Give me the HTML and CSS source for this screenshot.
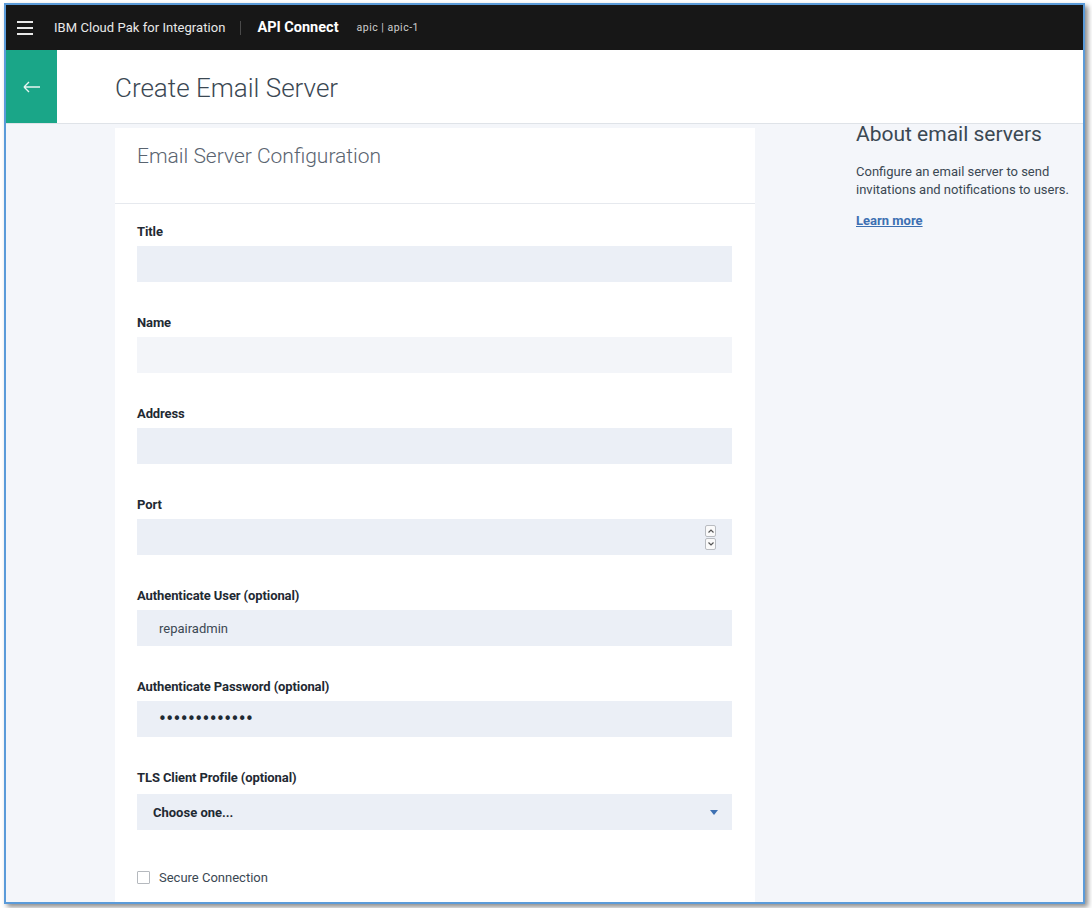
FILE: index.html
```html
<!DOCTYPE html>
<html lang="en">
<head>
<meta charset="utf-8">
<title>Create Email Server</title>
<link rel="stylesheet" href="styles.css">
</head>
<body>
<div class="frame">
  <header class="topbar">
    <span class="hamburger"><i></i><i></i><i></i></span>
    <span class="brand">IBM Cloud Pak for Integration</span>
    <span class="divider"></span>
    <span class="product">API Connect</span>
    <span class="instance">apic | apic-1</span>
  </header>
  <div class="titlebar">
    <a class="back" href="#">
      <svg width="18" height="12" viewBox="0 0 18 12"><path d="M1 6H17M1 6L6 1M1 6L6 11" fill="none" stroke="#e6f5f1" stroke-width="1.4"/></svg>
    </a>
    <h1 class="page-title">Create Email Server</h1>
  </div>
  <div class="content">
    <div class="gutter"></div>
    <section class="card">
      <div class="card-head">Email Server Configuration</div>
      <form class="card-body">
        <div class="field">
          <label class="label">Title</label>
          <div class="input"></div>
        </div>
        <div class="field">
          <label class="label">Name</label>
          <div class="input input-light"></div>
        </div>
        <div class="field">
          <label class="label">Address</label>
          <div class="input"></div>
        </div>
        <div class="field">
          <label class="label">Port</label>
          <div class="input input-number">
            <span class="spinner">
              <span class="spin"><svg width="6" height="4" viewBox="0 0 6 4"><path d="M0.5 3.5L3 1L5.5 3.5" fill="none" stroke="#555" stroke-width="1.2"/></svg></span>
              <span class="spin"><svg width="6" height="4" viewBox="0 0 6 4"><path d="M0.5 0.5L3 3L5.5 0.5" fill="none" stroke="#555" stroke-width="1.2"/></svg></span>
            </span>
          </div>
        </div>
        <div class="field">
          <label class="label">Authenticate User (optional)</label>
          <div class="input">repairadmin</div>
        </div>
        <div class="field">
          <label class="label">Authenticate Password (optional)</label>
          <div class="input input-pass">•••••••••••••</div>
        </div>
        <div class="field field-select">
          <label class="label">TLS Client Profile (optional)</label>
          <div class="input select">
            <span>Choose one...</span>
            <svg width="8" height="5" viewBox="0 0 8 5"><path d="M0 0H8L4 5Z" fill="#3d70b2"/></svg>
          </div>
        </div>
        <div class="check">
          <span class="box"></span>
          <span class="check-label">Secure Connection</span>
        </div>
      </form>
    </section>
    <aside class="aside">
      <h2 class="aside-title">About email servers</h2>
      <p class="aside-text">Configure an email server to send<br>invitations and notifications to users.</p>
      <a class="learn" href="#">Learn more</a>
    </aside>
  </div>
</div>
</body>
</html>
```
FILE: styles.css
```css
* { box-sizing: border-box; }
html, body { margin: 0; padding: 0; }
body {
  background: #ffffff;
  font-family: Roboto, "Noto Sans", sans-serif;
  width: 1092px;
  height: 908px;
  overflow: hidden;
}
.frame {
  margin: 3px 0 0 4px;
  width: 1081px;
  height: 901px;
  border: 2px solid #5b9bd9;
  box-shadow: 3px 3px 5px rgba(0,0,0,0.45);
  background: #f4f6fa;
  overflow: hidden;
  display: flex;
  flex-direction: column;
}
.topbar {
  height: 45px;
  flex: none;
  background: #171717;
  display: flex;
  align-items: center;
  color: #f2f2f2;
}
.hamburger {
  width: 16px;
  margin-left: 11px;
  display: flex;
  flex-direction: column;
  gap: 4px;
}
.hamburger i {
  display: block;
  height: 2px;
  background: #e8e8e8;
}
.brand {
  margin-left: 21px;
  font-size: 13px;
  letter-spacing: 0.05px;
  color: #e9e9e9;
}
.divider {
  width: 1px;
  height: 14px;
  background: #4a4a4a;
  margin: 0 16px 0 15px;
}
.product {
  font-weight: 700;
  font-size: 14.5px;
  color: #ffffff;
}
.instance {
  margin-left: 18px;
  font-size: 10.5px;
  letter-spacing: 0.5px;
  color: #cfcfcf;
}
.titlebar {
  height: 74px;
  flex: none;
  background: #ffffff;
  border-bottom: 1px solid #dfe3e8;
  display: flex;
  align-items: stretch;
}
.back {
  width: 51px;
  background: #1aa688;
  display: flex;
  align-items: center;
  justify-content: center;
}
.page-title {
  margin: 0 0 0 58px;
  align-self: center;
  font-size: 26px;
  font-weight: 300;
  color: #3b4853;
  padding-top: 2px;
}
.content {
  flex: 1;
  display: flex;
  align-items: stretch;
  min-height: 0;
}
.gutter { width: 109px; flex: none; }
.card {
  width: 640px;
  flex: none;
  margin-top: 4px;
  background: #ffffff;
}
.card-head {
  height: 76px;
  padding: 14px 0 0 22px;
  font-size: 21px;
  font-weight: 300;
  line-height: 28px;
  color: #5a6470;
  border-bottom: 1px solid #e6e9ee;
}
.card-body {
  padding: 20px 23px 0 22px;
  margin: 0;
}
.field { margin-bottom: 33px; }
.label {
  display: block;
  font-size: 13px;
  line-height: 16px;
  font-weight: 700;
  color: #1f2a33;
  letter-spacing: -0.1px;
  margin-bottom: 6px;
}
.field-select .label { margin-bottom: 8px; }
.input {
  height: 36px;
  background: #ebeff6;
  display: flex;
  align-items: center;
  padding: 0 16px 0 22px;
  font-size: 13px;
  color: #3b4853;
}
.input-light { background: #f3f5f9; }
.input-number { justify-content: flex-end; padding-right: 16px; }
.spinner {
  display: flex;
  flex-direction: column;
  gap: 1px;
}
.spin {
  width: 11px;
  height: 12px;
  border: 1px solid #b9bcc1;
  border-radius: 2px;
  background: #fafafa;
  display: flex;
  align-items: center;
  justify-content: center;
}
.input-pass {
  font-family: "DejaVu Sans", sans-serif;
  font-size: 15px;
  letter-spacing: -1.6px;
  color: #1f2a33;
  padding-left: 21px;
}
.select {
  justify-content: space-between;
  padding-left: 16px;
  padding-right: 14px;
  font-weight: 700;
  font-size: 13px;
  color: #1f2a33;
}
.check {
  display: flex;
  align-items: center;
  margin-top: 40px;
}
.box {
  width: 13px;
  height: 13px;
  border: 1px solid #b5b9be;
  border-radius: 1px;
  background: #fff;
}
.check-label {
  margin-left: 9px;
  font-size: 13px;
  color: #3b4853;
}
.aside {
  margin-left: 101px;
  padding-top: 0;
}
.aside-title {
  margin: 0;
  font-size: 21px;
  font-weight: 400;
  line-height: 20px;
  color: #3b4853;
}
.aside-text {
  margin: 19px 0 0 0;
  font-size: 13px;
  line-height: 18px;
  color: #3b4853;
  white-space: nowrap;
}
.learn {
  display: inline-block;
  margin-top: 14px;
  font-size: 13px;
  font-weight: 700;
  color: #3d70b2;
  text-decoration: underline;
}
```
